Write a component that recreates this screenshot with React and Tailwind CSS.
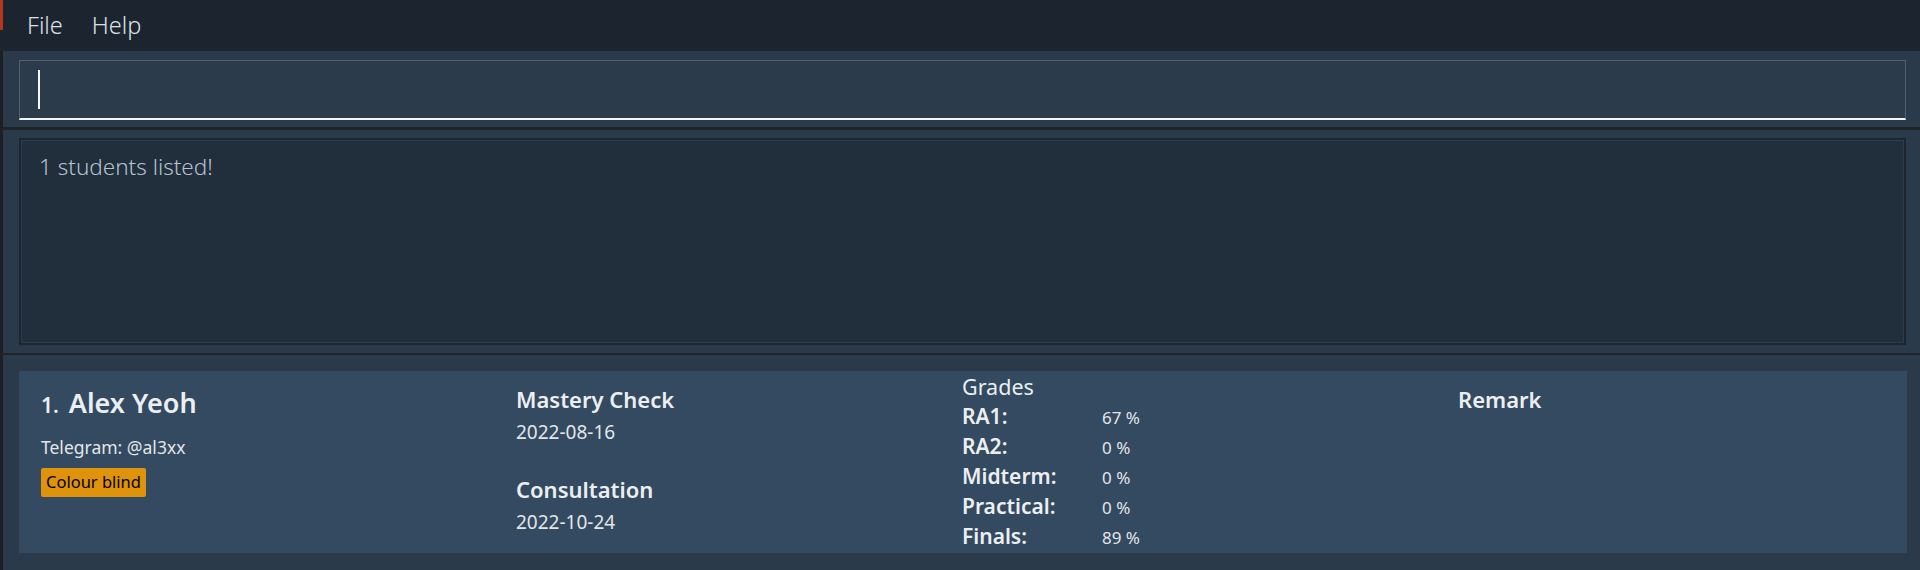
// App.jsx
import React from "react";

const grades = [
  ["RA1:", "67 %"],
  ["RA2:", "0 %"],
  ["Midterm:", "0 %"],
  ["Practical:", "0 %"],
  ["Finals:", "89 %"],
];

function StudentCard() {
  return (
    <div className="h-[182px] bg-[#344a60] pl-[22px] flex text-[#eceff2]">
      {/* name + telegram + tag */}
      <div className="w-[475px] pt-[14px] flex flex-col items-start">
        <div className="flex items-baseline h-[36px] leading-[36px]">
          <span className="text-[21px] font-semibold mr-[10px]">1.</span>
          <span className="text-[27px] font-semibold">Alex Yeoh</span>
        </div>
        <div className="mt-[14px] text-[17.5px] leading-[24px] text-[#e2e6ea]">
          Telegram: @al3xx
        </div>
        <div className="mt-[9px] h-[29px] px-[5px] flex items-center rounded-[2px] bg-[#df930b] text-black text-[16.5px]">
          Colour blind
        </div>
      </div>

      {/* mastery check + consultation */}
      <div className="w-[446px] pt-[13px] flex flex-col">
        <div className="text-[22px] font-semibold leading-[30px]">Mastery Check</div>
        <div className="mt-[6px] text-[19px] leading-[24px] text-[#e2e6ea]">2022-08-16</div>
        <div className="mt-[30px] text-[22px] font-semibold leading-[30px]">Consultation</div>
        <div className="mt-[6px] text-[19px] leading-[24px] text-[#e2e6ea]">2022-10-24</div>
      </div>

      {/* grades */}
      <div className="w-[496px] pt-[1px] flex flex-col">
        <div className="text-[21.5px] leading-[29px]">Grades</div>
        {grades.map(([label, value]) => (
          <div key={label} className="flex items-baseline h-[30px] leading-[30px]">
            <span className="w-[140px] text-[21px] font-semibold">{label}</span>
            <span className="text-[17px] text-[#e2e6ea]">{value}</span>
          </div>
        ))}
      </div>

      {/* remark */}
      <div className="flex-1 pt-[13px]">
        <div className="text-[22px] font-semibold leading-[30px]">Remark</div>
      </div>
    </div>
  );
}

export default function App() {
  return (
    <div className="w-[1920px] h-[570px] flex flex-col overflow-hidden bg-[#2a3a4a] font-['Noto_Sans',sans-serif]">
      {/* Menu bar */}
      <div className="relative h-[51px] flex-shrink-0 bg-[#1c2430] flex items-center pl-[27px] gap-[29px] text-[23.5px] font-light text-[#dde1e5]">
        <div className="absolute left-0 top-0 w-[3px] h-[30px] bg-[#b3361d]" />
        <span>File</span>
        <span>Help</span>
      </div>

      {/* Command box */}
      <div className="h-[79px] flex-shrink-0 bg-[#2a3a4b] border-l-[3px] border-l-[#1c2024] border-b-[3px] border-b-[#1f2326] pt-[9px] pl-[16px] pr-[14px]">
        <div className="h-[60px] bg-[#2b3b4c] border border-[#52616f] border-b-2 border-b-[#f2f4f6] flex items-center pl-[18px]">
          <div className="w-[2px] h-[39px] bg-[#f4f6f8]" />
        </div>
      </div>

      {/* Result display */}
      <div className="h-[225px] flex-shrink-0 bg-[#2a3a4b] border-l-[3px] border-l-[#1c2024] border-b-[2px] border-b-[#1f2326] pt-[8px] pl-[16px] pr-[14px]">
        <div className="h-[207px] bg-[#212e3c] border-2 border-[#1d2630] outline outline-1 outline-[#2e3d4d] -outline-offset-3 pl-[18px] pt-[12px]">
          <div className="text-[22.5px] font-light leading-[30px] text-[#b6c1cc]">1 students listed!</div>
        </div>
      </div>

      {/* Student list */}
      <div className="flex-1 bg-[#2a3a4a] border-l-[3px] border-l-[#1c2024] pt-[16px] pl-[16px] pr-[13px]">
        <StudentCard />
      </div>
    </div>
  );
}
